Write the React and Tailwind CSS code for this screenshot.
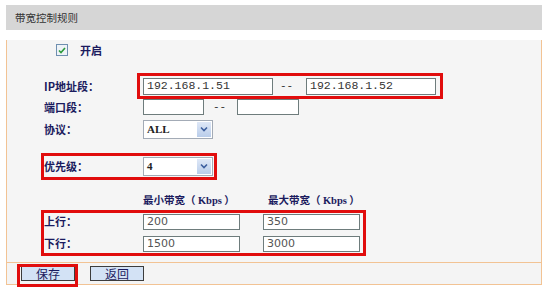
import React from 'react'

const cjk = "font-['Noto_Sans_CJK_SC','Noto_Sans',sans-serif]"
const labelCls = `w-[136px] shrink-0 pl-[37px] text-[11px] font-bold text-[#1b1b5e] ${cjk}`
const inputCls =
  "h-[16px] border border-[#6e7c7c] bg-white pl-[3px] flex items-center text-[#333] leading-none"

function TextBox({ w, value, mono }) {
  return (
    <div
      className={`${inputCls} ${w} ${
        mono
          ? "font-['Liberation_Mono',monospace] text-[11.5px]"
          : "font-['DejaVu_Sans',sans-serif] text-[11px] text-[#555]"
      }`}
    >
      {value}
    </div>
  )
}

function Select({ value }) {
  return (
    <div className="w-[70px] h-[19px] border border-[#a3abb6] bg-white flex items-stretch">
      <div className="flex-1 flex items-center pl-[3px] font-['Liberation_Serif',serif] font-bold text-[11px] text-[#222] leading-none">
        {value}
      </div>
      <div className="w-[14px] m-[1px] bg-gradient-to-b from-[#dfe8f7] to-[#b9cdea] flex items-center justify-center">
        <svg width="8" height="6" viewBox="0 0 8 6">
          <path d="M1 1.5 L4 4.5 L7 1.5" fill="none" stroke="#3d5f9e" strokeWidth="1.6" />
        </svg>
      </div>
    </div>
  )
}

function Dash({ w }) {
  return (
    <div className={`${w} h-full flex items-center font-['Liberation_Mono',monospace] text-[11px] leading-none text-[#333]`}>
      --
    </div>
  )
}

export default function App() {
  return (
    <div className="relative w-[554px] h-[301px] bg-white overflow-hidden">
      <div className="ml-[6px] pt-[5px] w-[536px]">
        {/* Title bar */}
        <div className="h-[25px] bg-[#d6d6d6] flex items-center pl-[9px]">
          <span className={`text-[10.5px] text-[#333] ${cjk}`}>带宽控制规则</span>
        </div>

        {/* Body */}
        <div className="bg-[#f5f5f5] border-l border-r border-[#f2c394] pb-[10px]">
          <div className="h-[20px] mt-[10px] flex items-center pl-[49px]">
            <div className="w-[12px] h-[12px] border border-[#6f8fb0] bg-[#eef3f7] flex items-center justify-center">
              <svg width="8" height="7" viewBox="0 0 8 7">
                <path d="M1 3.5 L3 5.5 L7 1" fill="none" stroke="#2b9a3a" strokeWidth="1.6" />
              </svg>
            </div>
            <span className={`ml-[12px] text-[11px] font-bold text-[#1b1b5e] ${cjk}`}>开启</span>
          </div>

          <div className="h-[18px] mt-[17px] flex items-center">
            <div className={labelCls}>IP地址段：</div>
            <TextBox w="w-[130px] h-[17px]" value="192.168.1.51" mono />
            <Dash w="w-[33px] pl-[7px]" />
            <TextBox w="w-[130px] h-[17px]" value="192.168.1.52" mono />
          </div>

          <div className="h-[18px] mt-[3px] flex items-center">
            <div className={labelCls}>端口段：</div>
            <TextBox w="w-[61px]" value="" mono />
            <Dash w="w-[33px] pl-[9px]" />
            <TextBox w="w-[62px]" value="" mono />
          </div>

          <div className="h-[20px] mt-[3px] flex items-center">
            <div className={labelCls}>协议：</div>
            <Select value="ALL" />
          </div>

          <div className="h-[20px] mt-[17px] flex items-center">
            <div className={labelCls}>优先级：</div>
            <Select value="4" />
          </div>

          <div className="h-[16px] mt-[16px] flex items-center">
            <div className="w-[136px] shrink-0" />
            <div className={`w-[125px] text-[10.5px] font-bold text-[#1b1b5e] ${cjk}`}>
              最小带宽（ <span className="font-['Liberation_Serif',serif]">Kbps</span> ）
            </div>
            <div className={`text-[10.5px] font-bold text-[#1b1b5e] ${cjk}`}>
              最大带宽（ <span className="font-['Liberation_Serif',serif]">Kbps</span> ）
            </div>
          </div>

          <div className="h-[17px] mt-[5px] flex items-center">
            <div className={labelCls}>上行：</div>
            <TextBox w="w-[97px]" value="200" />
            <div className="w-[23px]" />
            <TextBox w="w-[97px]" value="350" />
          </div>

          <div className="h-[17px] mt-[5px] flex items-center">
            <div className={labelCls}>下行：</div>
            <TextBox w="w-[97px]" value="1500" />
            <div className="w-[23px]" />
            <TextBox w="w-[97px]" value="3000" />
          </div>
        </div>

        {/* Footer */}
        <div className="h-[23px] bg-[#f4f4f4] border border-[#f2c394] flex items-center pl-[14px] gap-[15px]">
          {['保存', '返回'].map((t) => (
            <button
              key={t}
              className={`w-[54px] h-[15px] bg-[#d3e2f5] border border-[#3c3c3c] flex items-center justify-center text-[12px] leading-none text-[#1b1b5e] ${cjk}`}
            >
              {t}
            </button>
          ))}
        </div>
      </div>

      {/* Red annotation boxes */}
      <div className="absolute left-[137px] top-[73px] w-[306px] h-[26px] border-[3px] border-[#e10d0d]" />
      <div className="absolute left-[41px] top-[153px] w-[176px] h-[27px] border-[3px] border-[#e10d0d]" />
      <div className="absolute left-[41px] top-[210px] w-[325px] h-[46px] border-[3px] border-[#e10d0d]" />
      <div className="absolute left-[17px] top-[264px] w-[61px] h-[23px] border-[3px] border-[#e10d0d]" />
    </div>
  )
}
